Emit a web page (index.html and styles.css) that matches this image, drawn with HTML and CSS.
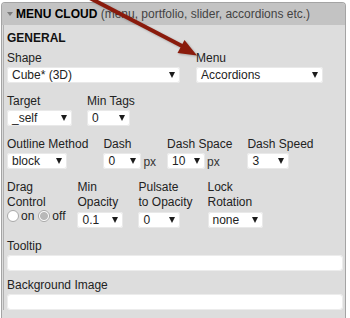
FILE: index.html
```html
<!DOCTYPE html>
<html lang="en">
<head>
    <meta charset="UTF-8">
    <title>Menu Cloud</title>
    <link rel="stylesheet" href="styles.css">
</head>
<body>
    <div class="panel">
        <div class="panel-head">
            <span class="caret"></span><b>MENU CLOUD</b> <span class="sub">(menu, portfolio, slider, accordions etc.)</span>
        </div>
        <div class="panel-body">
            <h3>GENERAL</h3>

            <div class="row row-first">
                <div class="field wide"><label>Shape</label><div class="select w-shape">Cube* (3D)</div></div>
                <div class="field"><label>Menu</label><div class="select w-menu">Accordions</div></div>
            </div>

            <div class="row">
                <div class="field"><label>Target</label><div class="select w-target">_self</div></div>
                <div class="field"><label>Min Tags</label><div class="select w-tags">0</div></div>
            </div>

            <div class="row">
                <div class="field"><label>Outline Method</label><div class="select w-outline">block</div></div>
                <div class="field tight"><label>Dash</label><div class="inline"><div class="select w-dash">0</div><span class="unit">px</span></div></div>
                <div class="field"><label>Dash Space</label><div class="inline"><div class="select w-dash">10</div><span class="unit">px</span></div></div>
                <div class="field"><label>Dash Speed</label><div class="select w-speed">3</div></div>
            </div>

            <div class="row row-tall">
                <div class="field narrow">
                    <label>Drag<br>Control</label>
                    <div class="radios">
                        <span class="radio"></span><span class="radio-text">on</span>
                        <span class="radio checked"></span><span class="radio-text last">off</span>
                    </div>
                </div>
                <div class="field"><label>Min<br>Opacity</label><div class="select w-opacity">0.1</div></div>
                <div class="field"><label>Pulsate<br>to Opacity</label><div class="select w-pulsate">0</div></div>
                <div class="field"><label>Lock<br>Rotation</label><div class="select w-lock">none</div></div>
            </div>

            <div class="full">
                <label>Tooltip</label>
                <div class="text-input"></div>
            </div>
            <div class="full second">
                <label>Background Image</label>
                <div class="text-input"></div>
            </div>
        </div>
    </div>

    <svg class="arrow" width="350" height="318" viewBox="0 0 350 318">
        <line x1="84" y1="-5" x2="183" y2="46.5" stroke="#8a1b0c" stroke-width="4"/>
        <polygon points="177.5,53 184.5,40 197,55.5" fill="#8a1b0c"/>
    </svg>
</body>
</html>
```

FILE: styles.css
```css
body {
    margin: 0;
    background: #fff;
    font-family: "Liberation Sans", Arial, sans-serif;
    font-size: 12px;
    color: #222;
    height: 318px;
    overflow: hidden;
}
.panel {
    margin: 2px 4px 0 1px;
    border: 1px solid #a4a4a4;
    border-bottom: none;
    border-radius: 4px 4px 0 0;
    background: #dddddd;
    min-height: 330px;
}
.panel-head {
    height: 22px;
    line-height: 22px;
    background: #c3c3c3;
    border-radius: 3px 3px 0 0;
    white-space: nowrap;
    overflow: hidden;
    color: #000;
}
.panel-head b {
    font-weight: bold;
}
.caret {
    display: inline-block;
    vertical-align: middle;
    margin: -2px 3px 0 5px;
    border-left: 3px solid transparent;
    border-right: 3px solid transparent;
    border-top: 4px solid #7c7c7c;
}
.sub {
    color: #444;
}
.panel-body {
    margin-left: 1px;
    border-left: 1px solid #b0b0b0;
    padding: 6px 2px 0 3px;
    line-height: 14px;
}
h3 {
    margin: 0;
    font-size: 12px;
    font-weight: bold;
    color: #111;
}
.row {
    display: flex;
    align-items: flex-start;
    margin-top: 11px;
}
.row-first {
    margin-top: 6px;
}
.field {
    margin-right: 15px;
}
.field.wide {
    margin-right: 16px;
}
.field.tight {
    margin-right: 11px;
}
.field.narrow {
    margin-right: 12px;
}
.field label,
.full label {
    display: block;
    white-space: nowrap;
}
.row-tall .field label {
    line-height: 15px;
}
.select {
    position: relative;
    height: 16px;
    line-height: 16px;
    margin-top: 2px;
    padding-left: 5px;
    box-sizing: border-box;
    background: #fff;
    border-radius: 3px;
    box-shadow: 0 0 0 1px #e9e9e9 inset;
    color: #222;
}
.select::after {
    content: "";
    position: absolute;
    right: 5px;
    top: 5px;
    border-left: 3.5px solid transparent;
    border-right: 3.5px solid transparent;
    border-top: 6px solid #1c1c1c;
}
.inline {
    display: flex;
    align-items: flex-end;
}
.unit {
    margin-left: 2px;
    line-height: 14px;
    color: #333;
}
.w-shape { width: 173px; }
.w-menu { width: 127px; }
.w-target { width: 65px; }
.w-tags { width: 43px; }
.w-outline { width: 60px; }
.w-dash { width: 38px; }
.w-speed { width: 42px; }
.w-opacity { width: 46px; }
.w-pulsate { width: 42px; }
.w-lock { width: 55px; }

.radios {
    display: flex;
    align-items: center;
    height: 12px;
}
.radio {
    width: 12px;
    height: 12px;
    box-sizing: border-box;
    border: 1px solid #a9a9a9;
    border-radius: 50%;
    background: #fff;
}
.radio.checked {
    background: radial-gradient(circle, #b8b8b8 0 3.5px, #fff 4.5px);
}
.radio-text {
    margin: 0 4px 0 2px;
}
.radio-text.last {
    margin-right: 0;
}
.full {
    margin-top: 11px;
}
.full.second {
    margin-top: 7px;
}
.text-input {
    height: 16px;
    margin-top: 2px;
    background: #fff;
    border-radius: 4px;
    box-shadow: 0 0 0 1px #ececec inset;
}
.arrow {
    position: absolute;
    left: 0;
    top: 0;
    pointer-events: none;
    filter: drop-shadow(1px 1px 1px rgba(0, 0, 0, 0.25));
}
```
